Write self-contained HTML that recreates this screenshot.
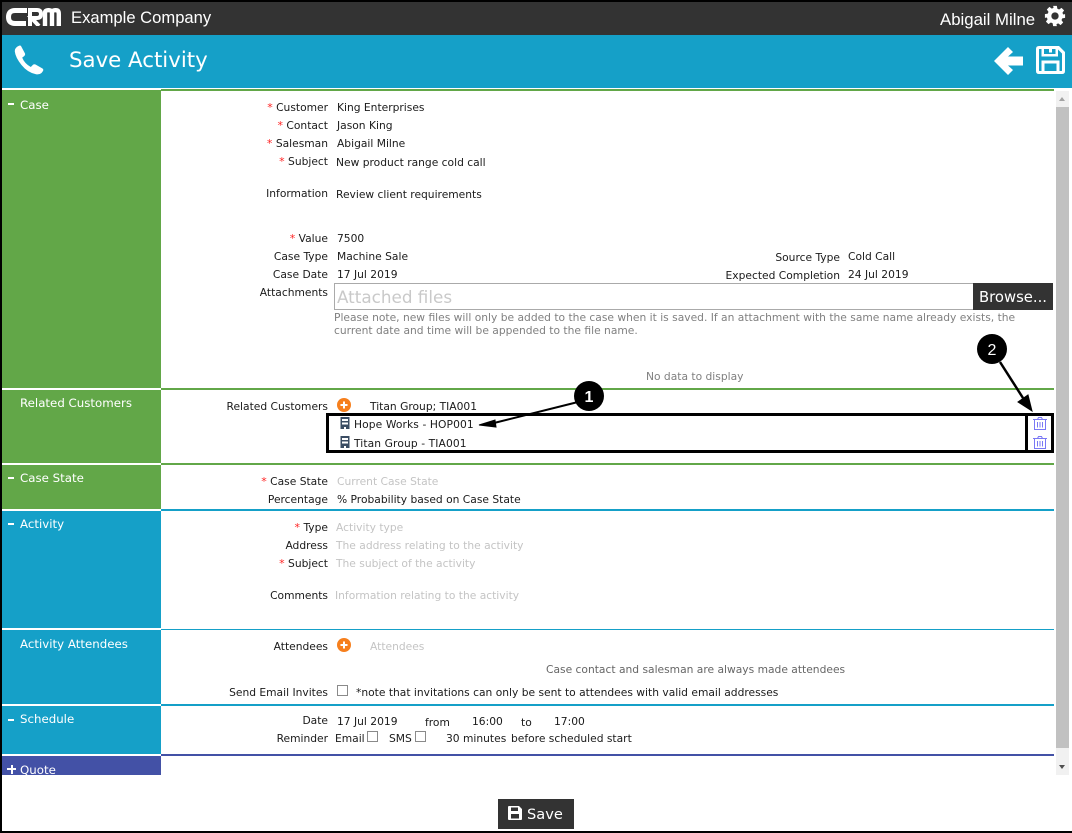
<!DOCTYPE html>
<html><head><meta charset="utf-8"><title>Save Activity</title>
<style>
html,body{margin:0;padding:0;background:#fff}
#p{position:relative;width:1072px;height:833px;overflow:hidden;background:#fff;font-family:"DejaVu Sans",sans-serif;font-size:10.7px;color:#1a1a1a}
#p div{position:absolute}
.t{position:absolute;white-space:nowrap;line-height:14px;margin-top:1px}
.l{position:absolute;white-space:nowrap;line-height:14px;right:744px;text-align:right;margin-top:1px}
.g{color:#c4c4c4}
.m{color:#808080}
.r{color:#f22;font-size:11px}
.s{color:#fff;font-size:11.8px;left:20px;line-height:14px;position:absolute;white-space:nowrap}
.d{left:8px;width:6px;height:2px;background:#fff}
.a{font-family:"Liberation Sans",sans-serif}
</style></head><body><div id="p">
<div style="left:0;top:0;width:1072px;height:2px;background:#000"></div>
<div style="left:0;top:0;width:2px;height:833px;background:#000;z-index:9"></div>
<div style="left:0;top:831px;width:1072px;height:2px;background:#000;z-index:9"></div>
<div style="left:2px;top:2px;width:1070px;height:33px;background:#333"></div>
<div style="left:2px;top:35px;width:1070px;height:53px;background:#15a0c8"></div>

<svg style="position:absolute;left:6px;top:8px" width="55" height="18" viewBox="0 0 55 18"><g fill="none" stroke="#fff"><path stroke-width="5" d="M21 2.500H9Q2.500 2.500 2.500 9T9 15.500H20"/><path stroke-width="4" d="M24 18V2H31Q35 2 35 6 35 10 31 10H25.500L33 18"/><path stroke-width="4.400" d="M39 18V5Q39 2.200 42 2.200H43Q46 2.200 46 5V18M46 5Q46 2.200 49 2.200H50Q52.800 2.200 52.800 6V18"/></g></svg>
<span class="t a" style="left:71px;top:8px;font-size:16.600px;line-height:18px;color:#fff">Example Company</span>
<span class="t a" style="left:940px;top:10px;font-size:16.800px;line-height:18px;color:#fff">Abigail Milne</span>
<svg style="position:absolute;left:1044px;top:5px" width="22" height="22" viewBox="0 0 24 24"><path fill="#fff" fill-rule="evenodd" d="M10 1h4l.6 3.100 1.900.8 2.600-1.800 2.800 2.800-1.800 2.600.8 1.900L23 10v4l-3.100.6-.8 1.900 1.800 2.600-2.800 2.800-2.600-1.800-1.900.8L14 23h-4l-.6-3.100-1.900-.8-2.600 1.800-2.800-2.800 1.800-2.600-.8-1.900L1 14v-4l3.100-.6.8-1.900-1.800-2.600 2.800-2.800 2.600 1.800 1.900-.8zM12 8a4 4 0 1 0 0 8 4 4 0 0 0 0-8z"/></svg>

<svg style="position:absolute;left:14px;top:45px" width="30" height="30" viewBox="0 0 30 30"><path fill="#fff" d="M7 1 11 8.500Q11.500 10 10 11.200L8.200 12.600Q10.500 18.500 16.800 22L19 19.800Q20.200 18.800 21.500 19.500L28.500 23.500Q29.800 24.500 29 26L27.500 28Q25.500 29.800 22 29.300 13.500 27.500 7.500 20 1.500 12.500.8 6.500.6 3.500 3.500 1.500L5 .7Q6.300.2 7 1Z"/></svg>
<span class="t" style="left:69px;top:46px;font-size:21.300px;line-height:28px;color:#fff">Save Activity</span>
<svg style="position:absolute;left:994px;top:46px" width="30" height="30" viewBox="0 0 30 30"><path fill="#fff" d="M0 15 14 1 19 6 14 10.500H29V19.500H14L19 24 14 29Z"/></svg>
<svg style="position:absolute;left:1036px;top:46px" width="29" height="28" viewBox="0 0 29 28"><path fill="#fff" fill-rule="evenodd" d="M3 0H23L29 6V25Q29 28 26 28H3Q0 28 0 25V3Q0 0 3 0ZM5.500 3H3.500Q3 3 3 3.500V24.500Q3 25 3.500 25H5.500V14.500H23.500V25H25.500Q26 25 26 24.500V7.500L22 3.500V10.500H5.500ZM8 3V8H19.500V3H16V6.500H13V3ZM8.500 17.500V25H20.500V17.500Z"/></svg>

<!-- side panels -->
<div style="left:2px;top:90px;width:159px;height:298px;background:#62a748"></div>
<div style="left:2px;top:390px;width:159px;height:73px;background:#62a748"></div>
<div style="left:2px;top:465px;width:159px;height:44px;background:#62a748"></div>
<div style="left:2px;top:511px;width:159px;height:117px;background:#15a0c8"></div>
<div style="left:2px;top:630px;width:159px;height:74px;background:#15a0c8"></div>
<div style="left:2px;top:706px;width:159px;height:48px;background:#15a0c8"></div>
<div style="left:2px;top:756px;width:159px;height:19px;background:#4351a6;overflow:hidden"></div>
<!-- rules -->
<div style="left:161px;top:89px;width:893px;height:2px;background:#62a748"></div>
<div style="left:161px;top:388px;width:893px;height:2px;background:#62a748"></div>
<div style="left:161px;top:463px;width:893px;height:2px;background:#62a748"></div>
<div style="left:161px;top:509px;width:893px;height:2px;background:#15a0c8"></div>
<div style="left:161px;top:629px;width:893px;height:1px;background:#15a0c8"></div>
<div style="left:161px;top:704px;width:893px;height:2px;background:#15a0c8"></div>
<div style="left:161px;top:754px;width:893px;height:2px;background:#4351a6"></div>

<div class="d" style="top:103px"></div><span class="s" style="top:98px">Case</span>
<span class="s" style="top:396px">Related Customers</span>
<div class="d" style="top:477px"></div><span class="s" style="top:471px">Case State</span>
<div class="d" style="top:523px"></div><span class="s" style="top:517px">Activity</span>
<span class="s" style="top:637px">Activity Attendees</span>
<div class="d" style="top:719px"></div><span class="s" style="top:712px">Schedule</span>
<div style="left:2px;top:756px;width:159px;height:19px;overflow:hidden"><div style="left:5px;top:12px;width:9px;height:2px;background:#fff"></div><div style="left:8.500px;top:8.500px;width:2px;height:9px;background:#fff"></div><span class="s" style="top:7px;left:18px">Quote</span></div>

<!-- scrollbar -->
<div style="left:1056px;top:91px;width:13px;height:684px;background:#f1f1f1"></div>
<div style="left:1056px;top:107px;width:13px;height:641px;background:#c1c1c1"></div>
<div style="left:1059px;top:97px;width:0;height:0;border-left:3.500px solid transparent;border-right:3.500px solid transparent;border-bottom:4px solid #a3a3a3"></div>
<div style="left:1059px;top:765px;width:0;height:0;border-left:3.500px solid transparent;border-right:3.500px solid transparent;border-top:4px solid #505050"></div>

<!-- Case -->
<span class="l" style="top:100px"><span class="r">*</span> Customer</span><span class="t" style="left:337px;top:100px">King Enterprises</span>
<span class="l" style="top:118px"><span class="r">*</span> Contact</span><span class="t" style="left:337px;top:118px">Jason King</span>
<span class="l" style="top:136px"><span class="r">*</span> Salesman</span><span class="t" style="left:337px;top:136px">Abigail Milne</span>
<span class="l" style="top:154px"><span class="r">*</span> Subject</span><span class="t" style="left:336px;top:155px">New product range cold call</span>
<span class="l" style="top:186px">Information</span><span class="t" style="left:336px;top:187px">Review client requirements</span>
<span class="l" style="top:231px"><span class="r">*</span> Value</span><span class="t" style="left:337px;top:231px">7500</span>
<span class="l" style="top:249px">Case Type</span><span class="t" style="left:337px;top:249px">Machine Sale</span>
<span class="l" style="top:267px">Case Date</span><span class="t" style="left:337px;top:267px">17 Jul 2019</span>
<span class="t" style="right:232px;top:250px">Source Type</span><span class="t" style="left:848px;top:249px">Cold Call</span>
<span class="t" style="right:232px;top:268px">Expected Completion</span><span class="t" style="left:848px;top:267px">24 Jul 2019</span>
<span class="l" style="top:285px">Attachments</span>
<div style="left:334px;top:283px;width:639px;height:25px;border:1px solid #aaa;border-right:0;box-sizing:content-box"></div>
<span class="t" style="left:337px;top:286px;font-size:16.800px;line-height:21px;color:#c9c9c9">Attached files</span>
<div style="left:973px;top:283px;width:80px;height:27px;background:#333"></div>
<span class="t" style="left:979px;top:289px;font-size:14.800px;line-height:16px;color:#fff">Browse...</span>
<span class="t m" style="left:334px;top:310px">Please note, new files will only be added to the case when it is saved. If an attachment with the same name already exists, the</span>
<span class="t m" style="left:334px;top:323px">current date and time will be appended to the file name.</span>
<span class="t m" style="left:646px;top:369px">No data to display</span>

<!-- Related -->
<span class="l" style="top:399px">Related Customers</span>
<svg style="position:absolute;left:337px;top:398px" width="14" height="14" viewBox="0 0 14 14"><circle cx="7" cy="7" r="7" fill="#f67f1d"/><path d="M7 3.500V10.500M3.500 7H10.500" stroke="#fff" stroke-width="2"/></svg>
<span class="t" style="left:370px;top:399px">Titan Group; TIA001</span>
<div style="left:326px;top:413px;width:696px;height:34px;border:3px solid #000;box-sizing:content-box"></div>
<div style="left:1028px;top:413px;width:23px;height:34px;border:3px solid #000;border-left:0;box-sizing:content-box"></div>
<svg style="position:absolute;left:340px;top:417px" width="10" height="12" viewBox="0 0 10 12"><path fill="#3b4d63" fill-rule="evenodd" d="M.5 0H9.500V12H6V10H4V12H.5ZM2 2V4H8V2ZM2 5.500V7.500H8V5.500Z"/></svg>
<span class="t" style="left:354px;top:417px;letter-spacing:.1px">Hope Works - HOP001</span>
<svg style="position:absolute;left:340px;top:436px" width="10" height="12" viewBox="0 0 10 12"><path fill="#3b4d63" fill-rule="evenodd" d="M.5 0H9.500V12H6V10H4V12H.5ZM2 2V4H8V2ZM2 5.500V7.500H8V5.500Z"/></svg>
<span class="t" style="left:354px;top:436px;letter-spacing:.1px">Titan Group - TIA001</span>
<svg style="position:absolute;left:1033px;top:417px" width="14" height="13" viewBox="0 0 14 13"><g fill="none" stroke="#7a78f5" stroke-width="1"><path d="M0 2.500H14M4.500 2.500 5.500 .5H8.500L9.500 2.500M1.500 2.500V12.500H12.500V2.500M4.500 5V10.500M7 5V10.500M9.500 5V10.500"/></g></svg>
<svg style="position:absolute;left:1033px;top:436px" width="14" height="13" viewBox="0 0 14 13"><g fill="none" stroke="#7a78f5" stroke-width="1"><path d="M0 2.500H14M4.500 2.500 5.500 .5H8.500L9.500 2.500M1.500 2.500V12.500H12.500V2.500M4.500 5V10.500M7 5V10.500M9.500 5V10.500"/></g></svg>

<!-- callouts -->
<svg style="position:absolute;left:470px;top:330px;z-index:5" width="580" height="110" viewBox="0 0 580 110"><circle cx="119" cy="66" r="15" fill="#000"/><path d="M108 72 24 93" stroke="#000" stroke-width="2"/><path d="M9 95 25 90 26 97Z" fill="#000" stroke="#000"/><circle cx="522" cy="19" r="15" fill="#000"/><path d="M530 32 553 68" stroke="#000" stroke-width="2.500"/><path d="M562 81 548 72 558 65Z" fill="#000" stroke="#000"/><text x="119" y="72" text-anchor="middle" font-family="Liberation Sans,sans-serif" font-size="16" font-weight="bold" fill="#fff">1</text><text x="522" y="25" text-anchor="middle" font-family="Liberation Sans,sans-serif" font-size="16" fill="#fff">2</text></svg>

<!-- Case State -->
<span class="l" style="top:474px"><span class="r">*</span> Case State</span><span class="t g" style="left:337px;top:474px">Current Case State</span>
<span class="l" style="top:492px">Percentage</span><span class="t" style="left:337px;top:492px">% Probability based on Case State</span>

<!-- Activity -->
<span class="l" style="top:520px"><span class="r">*</span> Type</span><span class="t g" style="left:336px;top:520px">Activity type</span>
<span class="l" style="top:538px">Address</span><span class="t g" style="left:336px;top:538px">The address relating to the activity</span>
<span class="l" style="top:556px"><span class="r">*</span> Subject</span><span class="t g" style="left:336px;top:556px">The subject of the activity</span>
<span class="l" style="top:588px">Comments</span><span class="t g" style="left:335px;top:588px">Information relating to the activity</span>

<!-- Attendees -->
<span class="l" style="top:639px">Attendees</span>
<svg style="position:absolute;left:337px;top:638px" width="14" height="14" viewBox="0 0 14 14"><circle cx="7" cy="7" r="7" fill="#f67f1d"/><path d="M7 3.500V10.500M3.500 7H10.500" stroke="#fff" stroke-width="2"/></svg>
<span class="t g" style="left:370px;top:639px">Attendees</span>
<span class="t" style="left:546px;top:662px;color:#666">Case contact and salesman are always made attendees</span>
<span class="l" style="top:685px">Send Email Invites</span>
<div style="left:337px;top:685px;width:9px;height:9px;border:1px solid #8a8a8a;background:#fff;box-sizing:content-box"></div>
<span class="t" style="left:356px;top:685px">*note that invitations can only be sent to attendees with valid email addresses</span>

<!-- Schedule -->
<span class="l" style="top:713px">Date</span><span class="t" style="left:337px;top:714px">17 Jul 2019</span>
<span class="t" style="left:425px;top:715px">from</span><span class="t" style="left:472px;top:714px">16:00</span><span class="t" style="left:521px;top:715px">to</span><span class="t" style="left:554px;top:714px">17:00</span>
<span class="l" style="top:731px">Reminder</span>
<span class="t" style="left:335px;top:731px">Email</span>
<div style="left:367px;top:731px;width:9px;height:9px;border:1px solid #8a8a8a;box-sizing:content-box"></div>
<span class="t" style="left:389px;top:731px">SMS</span>
<div style="left:415px;top:731px;width:9px;height:9px;border:1px solid #8a8a8a;box-sizing:content-box"></div>
<span class="t" style="left:446px;top:731px">30 minutes</span>
<span class="t" style="left:511px;top:731px">before scheduled start</span>

<!-- Save -->
<div style="left:498px;top:799px;width:76px;height:30px;background:#333"></div>
<svg style="position:absolute;left:508px;top:806px" width="14" height="14" viewBox="0 0 14 14"><path fill="#fff" fill-rule="evenodd" d="M1 0H11L14 3V13Q14 14 13 14H1Q0 14 0 13V1Q0 0 1 0ZM3 1.500V5H10V1.500ZM3 8V12.500H11V8Z"/></svg>
<span class="t" style="left:527px;top:806px;font-size:14.600px;line-height:16px;color:#fff">Save</span>
</div></body></html>
